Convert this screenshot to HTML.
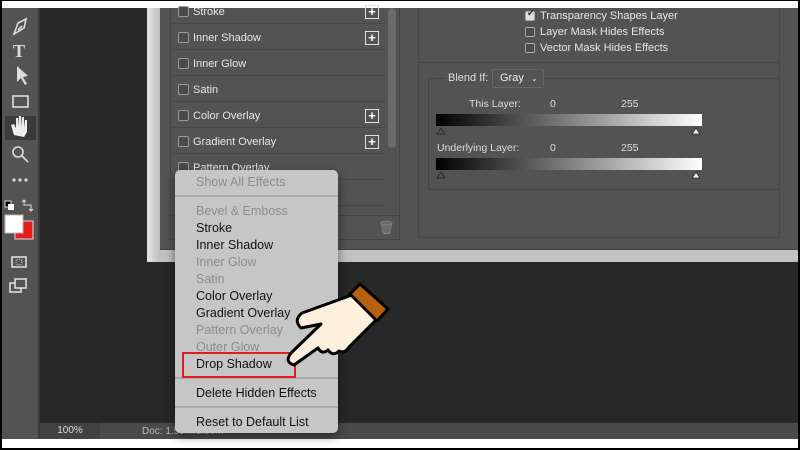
<!DOCTYPE html>
<html><head><meta charset="utf-8"><style>
*{margin:0;padding:0;box-sizing:border-box}
body{width:800px;height:450px;background:#000;position:relative;overflow:hidden;font-family:"Liberation Sans",sans-serif}
.a{position:absolute}
.row{position:absolute;left:172px;width:214px;height:26px;border-bottom:1px solid #474747;color:#e6e6e6;font-size:11px;line-height:28px;padding-left:21px}
.cb{position:absolute;left:6px;top:8px;width:11px;height:11px;border:1px solid #9a9a9a;border-radius:2px;background:#4a4a4a}
.plus{position:absolute;left:193px;top:7px;width:14px;height:14px;border:1px solid #e0e0e0;color:#fff;font-size:13px;line-height:11px;text-align:center;font-weight:bold}
.mi{position:absolute;left:21px;font-size:12.5px;color:#111;line-height:17px}
.mi.d{color:#8c8c8c}
.sep{position:absolute;left:0;width:163px;height:2px;background:#aaa}
.rc{position:absolute;left:525px;width:10px;height:10px;border:1px solid #aaa;border-radius:2px;background:#4a4a4a}
.rt{position:absolute;left:540px;font-size:11px;color:#e6e6e6}
.lb{position:absolute;font-size:10.5px;color:#ddd}
.grad{position:absolute;left:436px;width:266px;height:12px;background:linear-gradient(90deg,#000,#fff)}
</style></head><body>
<div class="a" style="left:2px;top:1px;width:796px;height:7px;background:#fff"></div>
<div class="a" style="left:2px;top:439px;width:796px;height:9px;background:#fff"></div>
<div class="a" style="left:2px;top:8px;width:36px;height:431px;background:#535353"></div>
<div class="a" style="left:38px;top:8px;width:2px;height:431px;background:#3a3a3a"></div>
<div class="a" style="left:40px;top:8px;width:758px;height:431px;background:#282828"></div>
<svg class="a" style="left:2px;top:8px" width="36" height="300" viewBox="0 0 36 300">
<g fill="none" stroke="#ddd" stroke-width="1.6">
<path d="M12 26 L16 15 L24 11 L22 20 Z M16 22 l4 -4"/>
<rect x="11" y="88" width="15" height="11"/>
<circle cx="16" cy="144" r="5"/><path d="M20 148 l6 6"/>
<rect x="10" y="249" width="14" height="10"/>
<rect x="8" y="275" width="11" height="9"/><rect x="13" y="271" width="11" height="9" fill="#535353"/>
</g>
<text x="11" y="49" fill="#ddd" font-size="18" font-family="Liberation Serif" font-weight="bold">T</text>
<path d="M15 58 L15 74 L19 70 L23 77 L25 76 L21 69 L26 68 Z" fill="#ddd"/>
<rect x="3" y="108" width="31" height="24" fill="#3a3a3a"/>
<path d="M12 127 L9 117 L12 116 L14 120 L14 110 L16 110 L16 119 L17 108 L19 108 L19 119 L20 109 L22 109 L22 120 L23 112 L25 112 L25 124 L22 129 Z" fill="#eee"/>
<circle cx="12" cy="172" r="1.6" fill="#ddd"/><circle cx="18" cy="172" r="1.6" fill="#ddd"/><circle cx="24" cy="172" r="1.6" fill="#ddd"/>
<rect x="3" y="193" width="6" height="6" fill="#000" stroke="#ddd"/><rect x="6" y="196" width="6" height="6" fill="#fff"/>
<path d="M22 192 v5 h7 v6 M20 194 l2 -2 2 2 M27 201 l2 2 2 -2" stroke="#ddd" fill="none"/>
<rect x="13" y="213" width="18" height="18" fill="#e31b1b" stroke="#ddd"/>
<rect x="3" y="207" width="18" height="18" fill="#fff" stroke="#bbb"/>
<circle cx="17" cy="254" r="3" fill="none" stroke="#ddd" stroke-dasharray="1 1"/>
</svg>
<div class="a" style="left:147px;top:8px;width:651px;height:254px;background:#c2c2c2"></div>
<div class="a" style="left:147px;top:8px;width:13px;height:254px;background:linear-gradient(90deg,#e6e6e6,#bdbdbd)"></div>
<div class="a" style="left:160px;top:8px;width:638px;height:242px;background:#535353;border-bottom:1px solid #444"></div>
<div class="a" style="left:170px;top:8px;width:230px;height:208px;border:1px solid #444;border-top:none"></div>
<div class="a" style="left:388px;top:8px;width:8px;height:140px;background:#6a6a6a;border-radius:4px"></div>
<div class="a" style="left:170px;top:216px;width:230px;height:24px;border:1px solid #444;border-top:none"></div>
<div class="a" style="left:378px;top:220px;color:#888;font-size:13px">🗑</div>
<div class="row" style="top:-2px">Stroke<div class="cb"></div><div class="plus">+</div></div>
<div class="row" style="top:24px">Inner Shadow<div class="cb"></div><div class="plus">+</div></div>
<div class="row" style="top:50px">Inner Glow<div class="cb"></div></div>
<div class="row" style="top:76px">Satin<div class="cb"></div></div>
<div class="row" style="top:102px">Color Overlay<div class="cb"></div><div class="plus">+</div></div>
<div class="row" style="top:128px">Gradient Overlay<div class="cb"></div><div class="plus">+</div></div>
<div class="row" style="top:154px">Pattern Overlay<div class="cb"></div></div>
<div class="row" style="top:180px"></div>
<div class="a" style="left:418px;top:8px;width:362px;height:55px;border:1px solid #444;border-top:none"></div>
<div class="a" style="left:428px;top:78px;width:352px;height:112px;border:1px solid #444"></div>
<div class="a" style="left:418px;top:8px;width:362px;height:230px;border:1px solid #484848;border-top:none"></div>
<div class="rc" style="top:11px;background:#ddd"></div><div class="a" style="left:527px;top:8px;font-size:9px;color:#333">✔</div>
<div class="rt" style="top:10px">Transparency Shapes Layer</div>
<div class="rc" style="top:27px"></div><div class="rt" style="top:26px">Layer Mask Hides Effects</div>
<div class="rc" style="top:43px"></div><div class="rt" style="top:42px">Vector Mask Hides Effects</div>
<div class="a" style="left:444px;top:70px;width:100px;height:18px;background:#535353"></div>
<div class="lb" style="left:448px;top:72px;font-size:11px">Blend If:</div>
<div class="a" style="left:492px;top:69px;width:52px;height:19px;border:1px solid #666;border-radius:2px;color:#eee;font-size:11px;line-height:17px;padding-left:7px">Gray <span style="font-size:8px;margin-left:4px">⌄</span></div>
<div class="lb" style="left:469px;top:98px">This Layer:</div><div class="lb" style="left:550px;top:98px">0</div><div class="lb" style="left:621px;top:98px">255</div>
<div class="grad" style="top:114px"></div>
<div class="lb" style="left:437px;top:142px">Underlying Layer:</div><div class="lb" style="left:550px;top:142px">0</div><div class="lb" style="left:621px;top:142px">255</div>
<div class="grad" style="top:158px"></div>
<svg class="a" style="left:434px;top:126px" width="270" height="60"><g stroke="#222" stroke-width="0.8"><path d="M3 8 l4 -6 4 6 z" fill="#555"/><path d="M258 8 l4 -6 4 6 z" fill="#eee"/><path d="M3 52 l4 -6 4 6 z" fill="#555"/><path d="M258 52 l4 -6 4 6 z" fill="#eee"/></g></svg>
<div class="a" style="left:40px;top:423px;width:758px;height:16px;background:#4a4a4a"></div>
<div class="a" style="left:40px;top:423px;width:60px;height:16px;background:#424242;color:#ddd;font-size:10px;text-align:center;line-height:16px">100%</div>
<div class="a" style="left:142px;top:426px;color:#bbb;font-size:10px">Doc: 1.59M/1.59M</div>
<div class="a" style="left:175px;top:170px;width:163px;height:263px;background:#c6c6c6;border-radius:5px;box-shadow:0 3px 10px rgba(0,0,0,.5)">
<div class="mi d" style="top:4px">Show All Effects</div>
<div class="sep" style="top:25px"></div>
<div class="mi d" style="top:33px">Bevel &amp; Emboss</div>
<div class="mi" style="top:50px">Stroke</div>
<div class="mi" style="top:67px">Inner Shadow</div>
<div class="mi d" style="top:84px">Inner Glow</div>
<div class="mi d" style="top:101px">Satin</div>
<div class="mi" style="top:118px">Color Overlay</div>
<div class="mi" style="top:135px">Gradient Overlay</div>
<div class="mi d" style="top:152px">Pattern Overlay</div>
<div class="mi d" style="top:169px">Outer Glow</div>
<div class="mi" style="top:186px">Drop Shadow</div>
<div class="sep" style="top:207px"></div>
<div class="mi" style="top:215px">Delete Hidden Effects</div>
<div class="sep" style="top:236px"></div>
<div class="mi" style="top:244px">Reset to Default List</div>
</div>
<div class="a" style="left:182px;top:352px;width:114px;height:26px;border:2px solid #e02020"></div>
<svg class="a" style="left:0;top:0" width="800" height="450">
<path d="M352 295 L302 313 Q293 320 301 328 L321 324 L291 353 Q284 362 294 365 L318 348 Q322 355 328 350 Q333 357 339 351 Q345 354 349 347 L376 320 Z" fill="#fcf0dc" stroke="#000" stroke-width="3" stroke-linejoin="round"/>
<path d="M350 294 L360 284 L388 309 L377 321 Z" fill="#b8600f" stroke="#000" stroke-width="3" stroke-linejoin="round"/>
</svg>
</body></html>
